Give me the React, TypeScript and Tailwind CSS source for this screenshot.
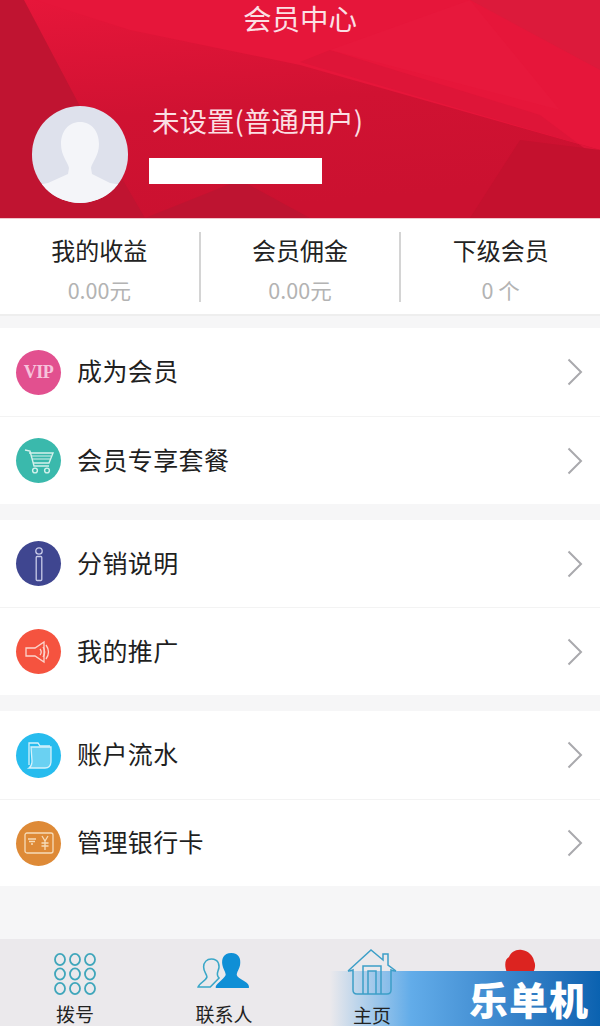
import React from "react";

const font = { fontFamily: '"Noto Sans CJK SC", "Liberation Sans", sans-serif' };

const Chevron = () => (
  <svg width="16" height="28" viewBox="0 0 16 28" fill="none" className="shrink-0">
    <path d="M1.5 1.5 L14 14 L1.5 26.5" stroke="#a9a9ad" strokeWidth="2" />
  </svg>
);

const IconCircle = ({ bg, children }: { bg: string; children: React.ReactNode }) => (
  <div className={`w-[45px] h-[45px] rounded-full flex items-center justify-center shrink-0 ${bg}`}>{children}</div>
);

const Vip = () => (
  <span className="text-[18px] font-bold text-[#f6c3dc] tracking-[-0.5px]" style={{ fontFamily: '"Liberation Serif", serif' }}>VIP</span>
);
const Cart = () => (
  <svg width="32" height="30" viewBox="0 0 32 30" fill="none" stroke="#d5f1ec" strokeWidth="1.4">
    <path d="M2 4 L7 5 L11 20 H26" />
    <path d="M6 7 H30 L26 17 H10" />
    <path d="M8 10 H28 M9 13 H27" strokeWidth="1.2" />
    <circle cx="12" cy="24.5" r="2.4" />
    <circle cx="24" cy="24.5" r="2.4" />
  </svg>
);
const Info = () => (
  <svg width="14" height="36" viewBox="0 0 14 36" fill="none" stroke="#c8cbe8" strokeWidth="1.3">
    <circle cx="7" cy="5" r="3.2" />
    <rect x="4.2" y="10.5" width="5.6" height="24" rx="1" />
  </svg>
);
const Speaker = () => (
  <svg width="30" height="24" viewBox="0 0 30 24" fill="none" stroke="#fbd5cd" strokeWidth="1.3">
    <path d="M2 8 H11 L20 2 V22 L11 16 H2 Z" />
    <path d="M16 9 Q18.5 12 16 15 M19 7 Q22.5 12 19 17 M22 5 Q27 12 22 19" />
  </svg>
);
const Folder = () => (
  <svg width="26" height="32" viewBox="0 0 26 32" fill="none" stroke="#d4f1fb" strokeWidth="1.3">
    <path d="M3 26 V4 H12 L14 7 H24" />
    <path d="M5 8 H25 V22 Q25 29 19 29 H3 Q6 27 6 22 Z" fill="#8fdcf5" fillOpacity="0.65" />
  </svg>
);
const Card = () => (
  <svg width="30" height="24" viewBox="0 0 30 24" fill="none" stroke="#f6dcb9" strokeWidth="1.3">
    <rect x="1" y="2" width="28" height="20" rx="2" />
    <path d="M4 8 H12 M5 10.5 H11 M7 13 H9" strokeWidth="1.5" />
    <path d="M18 5 L21 10 L24 5 M21 10 V19 M17.5 12 H24.5 M17.5 15 H24.5" />
  </svg>
);

const Row = ({ icon, label, cls }: { icon: React.ReactNode; label: string; cls: string }) => (
  <div className={`flex items-center pl-[16px] pr-[17px] bg-white ${cls}`}>
    {icon}
    <span className="ml-[16px] -mt-[3px] text-[25px] leading-none text-[#1f1f1f] flex-1 tracking-[0.4px]">{label}</span>
    <Chevron />
  </div>
);

const Stat = ({ title, value, divider }: { title: string; value: string; divider?: boolean }) => (
  <div className={`flex-1 h-[70px] flex flex-col items-center ${divider ? "border-r-2 border-[#d4d4d4]" : ""}`}>
    <span className="text-[24px] leading-[36px] text-[#222]">{title}</span>
    <span className="text-[21.5px] leading-[24px] mt-[10px] text-[#b3b3b3]">{value}</span>
  </div>
);

const HeaderBg = () => (
  <svg className="absolute inset-0 w-full h-full" viewBox="0 0 600 218" preserveAspectRatio="none">
    <defs>
      <linearGradient id="hb" x1="0" y1="0" x2="0.25" y2="1">
        <stop offset="0" stopColor="#e7163a" />
        <stop offset="0.55" stopColor="#d01232" />
        <stop offset="1" stopColor="#cb1130" />
      </linearGradient>
    </defs>
    <rect width="600" height="218" fill="url(#hb)" />
    <polygon points="0,0 24,0 82,110 145,218 0,218" fill="#c01431" />
    <polygon points="35,0 600,0 600,150 300,65 130,30" fill="#e6163a" />
    <polygon points="300,62 600,150 600,160 540,115 330,50" fill="#de1538" />
    <polygon points="470,0 600,0 600,70" fill="#dc1a3b" />
    <polygon points="330,50 470,0 560,110" fill="#e7183c" />
    <polygon points="145,218 240,180 310,218" fill="#be1431" />
    <polygon points="520,140 600,150 600,218 470,218" fill="#c4112e" />
  </svg>
);

const TabLabel = ({ children }: { children: React.ReactNode }) => (
  <span className="text-[19px] leading-none text-[#222]">{children}</span>
);

export default function App() {
  return (
    <div className="w-[600px] h-[1026px] relative overflow-hidden bg-[#f6f6f7] flex flex-col" style={font}>
      <header className="relative h-[218px] shrink-0 overflow-hidden">
        <HeaderBg />
        <div className="relative h-full">
          <div className="text-center text-[28.5px] leading-[38px] -mt-[1px] text-[#fbdfe3]">会员中心</div>
          <div className="flex items-start pl-[32px] mt-[69px]">
            <div className="w-[96px] h-[97px] rounded-full bg-[#dee1ec] overflow-hidden shrink-0">
              <svg viewBox="0 0 96 97" className="w-full h-full">
                <path
                  d="M48 16 C60 16 67 26 67 38 C67 50 60 56 59 62 L60 68 L78 77 L96 80 V97 H0 V80 L16 77 L36 68 L37 62 C36 56 29 50 29 38 C29 26 36 16 48 16 Z"
                  fill="#f4f5f9"
                />
              </svg>
            </div>
            <div className="ml-[21px]">
              <div className="text-[27.5px] leading-[34px] -mt-[3px] text-[#fbdfe3] ml-[3px] whitespace-nowrap">未设置(普通用户)</div>
              <div className="w-[173px] h-[26px] bg-white mt-[21px]" />
            </div>
          </div>
        </div>
      </header>

      <section className="h-[98px] shrink-0 bg-white border-t border-[#f0c6cd] border-b-2 border-b-[#eeeeee] flex pt-[13px]">
        <Stat title="我的收益" value="0.00元" divider />
        <Stat title="会员佣金" value="0.00元" divider />
        <Stat title="下级会员" value="0 个" />
      </section>

      <div className="mt-[12px] flex flex-col gap-[16px]">
        <div>
          <Row cls="h-[89px] border-b border-[#f3f3f3]" icon={<IconCircle bg="bg-[#e2508f]"><Vip /></IconCircle>} label="成为会员" />
          <Row cls="h-[87px]" icon={<IconCircle bg="bg-[#3ab9ac]"><Cart /></IconCircle>} label="会员专享套餐" />
        </div>
        <div>
          <Row cls="h-[88px] border-b border-[#f3f3f3]" icon={<IconCircle bg="bg-[#3f4690]"><Info /></IconCircle>} label="分销说明" />
          <Row cls="h-[87px]" icon={<IconCircle bg="bg-[#f5533f]"><Speaker /></IconCircle>} label="我的推广" />
        </div>
        <div>
          <Row cls="h-[89px] border-b border-[#f3f3f3]" icon={<IconCircle bg="bg-[#27bcee]"><Folder /></IconCircle>} label="账户流水" />
          <Row cls="h-[86px]" icon={<IconCircle bg="bg-[#de8a37]"><Card /></IconCircle>} label="管理银行卡" />
        </div>
      </div>

      <nav className="absolute left-0 right-0 bottom-0 h-[87px] bg-[#ebe9ec] flex">
        <div className="w-[150px] flex flex-col items-center gap-[9px] pt-[14px]">
          <svg width="42" height="42" viewBox="0 0 42 42" fill="none" stroke="#3fa6bb" strokeWidth="1.8">
            {[6.5, 21, 35.5].flatMap((y) =>
              [6, 21, 36].map((x) => <ellipse key={`${x}-${y}`} cx={x} cy={y} rx="5" ry="5.6" />)
            )}
          </svg>
          <TabLabel>拨号</TabLabel>
        </div>
        <div className="w-[148px] flex flex-col items-center gap-[15px] pt-[14px]">
          <svg width="53" height="36" viewBox="0 0 48 36" preserveAspectRatio="none" fill="none" className="-ml-[2px]">
            <path d="M13 6 C20 6 21 13 19 18 C18 21 18 23 20 25 L12 34 H1 C2 30 8 28 9 24 C9 21 6 19 6 14 C6 9 9 6 13 6 Z" stroke="#3aa7c8" strokeWidth="1.4" />
            <path d="M31 0 C38 0 40 6 39 12 C38 17 36 19 36 22 C37 26 46 28 47 33 V35 H17 C16 31 24 27 26 22 C26 19 24 17 23 12 C22 6 24 0 31 0 Z" fill="#0f8fd6" />
          </svg>
          <TabLabel>联系人</TabLabel>
        </div>
        <div className="relative z-10 w-[150px] flex flex-col items-center gap-[9px] pt-[10px] -ml-[1px]">
          <svg width="50" height="47" viewBox="0 0 50 47" fill="none" stroke="#3d9fc8" strokeWidth="1.5">
            <path d="M1 22 L24 1 L36 11 V5 H41 V16 L49 22" />
            <path d="M1 22 Q4 22 6 21 V41 Q6 45 10 45 H40 Q44 45 44 41 V21 Q46 22 49 22" />
            <path d="M16 45 V17 H34 V45 M21 45 V22 H29 V45" />
          </svg>
          <TabLabel>主页</TabLabel>
        </div>
        <div className="flex-1 flex justify-center pt-[10px] pr-[8px]">
          <svg width="32" height="24" viewBox="0 0 32 24">
            <path d="M3 24 C0 16 1 10 5 8 C7 3 12 0 18 1 C24 2 29 6 30 12 C32 16 31 20 29 24 Z" fill="#dc2420" />
          </svg>
        </div>
      </nav>

      <div className="absolute right-0 bottom-0 w-[270px] h-[55px] bg-gradient-to-r from-[#ebe9ec00] via-[#62ace9] via-30% to-[#0a62b0] flex items-center justify-end pr-[11px]">
        <span className="text-[39px] font-black leading-none text-white tracking-[1px]">乐单机</span>
      </div>
    </div>
  );
}
